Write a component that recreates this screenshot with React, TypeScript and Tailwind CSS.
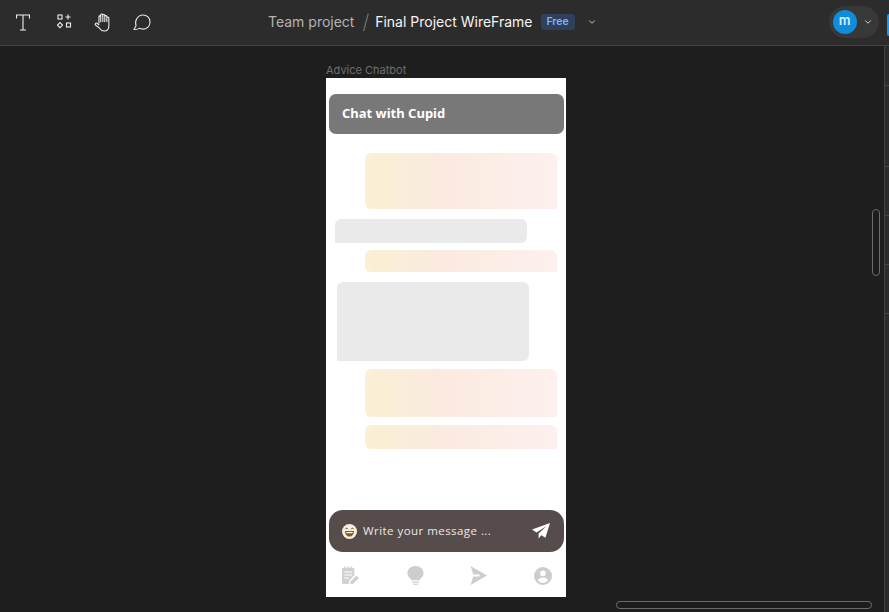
import React from 'react';
import { ChevronDown } from 'lucide-react';

const bubbleGradient = 'bg-gradient-to-r from-[#faf0d4] from-0% via-[#fbeae0] via-40% to-[#fdf0ee]';

const OutgoingBubble = ({ className }: { className: string }) => (
  <div className={`ml-[39px] w-[192px] rounded-t-[6px] rounded-bl-[6px] ${bubbleGradient} ${className}`} />
);

const App = () => {
  return (
    <div className="relative flex h-[612px] w-[889px] flex-col overflow-hidden bg-[#1e1e1e] font-['Inter',sans-serif]">
      {/* Top toolbar */}
      <header className="flex h-[46px] shrink-0 items-center border-b border-[#444444] bg-[#2c2c2c] pb-[1px]">
        <div className="flex w-[268px] items-center pl-[16px]">
          <svg width="14" height="17" viewBox="0 0 14 17" fill="none" stroke="#f0f0f0" strokeWidth="1.1">
            <path d="M0.5 4.5V1H13.5V4.5M7 1V16M4 16H10" />
          </svg>
          <svg width="15" height="16" viewBox="0 0 15 16" fill="none" stroke="#eeeeee" strokeWidth="1.1" className="ml-[27px]">
            <rect x="1" y="1" width="4" height="4" />
            <path d="M11 0.5V5.5M8.5 3H13.5" />
            <path d="M3 8.6L5.5 11.1L3 13.6L0.5 11.1Z" />
            <rect x="9.5" y="9" width="4" height="4" />
          </svg>
          <svg width="18" height="21" viewBox="0 0 20 22" fill="none" stroke="#f0f0f0" strokeWidth="1.2" strokeLinecap="round" strokeLinejoin="round" className="ml-[22px]">
            <path d="M5.5 11.5V4.5C5.5 3.4 7.5 3.4 7.5 4.5V2.6C7.5 1.2 9.8 1.2 9.8 2.6V3C9.8 1.8 12 1.8 12 3V4C12 3 14.3 3 14.3 4.4V5.5C14.3 4.6 16.5 4.6 16.5 5.8V15C16.5 18.6 14.4 20.5 11.4 20.5C8.8 20.5 7.6 19.4 6.4 17.6L1.6 13.8C0.6 12.8 2 11 3.4 11.8L5.5 13.6M7.5 4.5V10M9.8 3V10M12 4V10M14.3 5.5V10" />
          </svg>
          <svg width="18" height="17" viewBox="0 0 19 18" fill="none" stroke="#e8e8e8" strokeWidth="1.1" strokeLinejoin="round" className="ml-[21px]">
            <path d="M1 16.5L3.2 12.4C1.4 7.4 4.8 1 10.6 1C14.8 1 18 4.2 18 8.4C18 12.8 14.6 16 10.5 16C8.8 16 7.6 15.6 6.6 15.2C5 16 3 16.5 1 16.5Z" />
          </svg>
        </div>
        <div className="flex items-center text-[14px] leading-none">
          <span className="text-[#b3b3b3]">Team project</span>
          <span className="ml-[8px] text-[20px] font-extralight text-[#8a8a8a]">/</span>
          <span className="ml-[6px] text-[#f5f5f5]">Final Project WireFrame</span>
          <span className="ml-[8px] flex h-[16px] w-[34px] items-center justify-center rounded-[3px] bg-[#2f3f5c] text-[10.5px] font-semibold text-[#7cb7f5]">
            Free
          </span>
          <ChevronDown size={10} strokeWidth={2} className="ml-[12px] text-[#dddddd]" />
        </div>
        <div className="ml-[232px] flex h-[32px] w-[50px] items-center rounded-full bg-[#383838] pl-[4px]">
          <div className="flex h-[24px] w-[24px] items-center justify-center rounded-full bg-[#0d8ddb] pb-[2px] text-[13px] font-semibold text-[#d9effc]">
            m
          </div>
          <ChevronDown size={10} strokeWidth={2.2} className="ml-[6px] text-[#dddddd]" />
        </div>
      </header>

      {/* Canvas with the phone frame */}
      <main className="ml-[326px] w-[240px]">
        <p className="mt-[17px] h-[15px] text-[11px] leading-[14px] text-[#6e6e6e]">Advice Chatbot</p>
        <div className="flex h-[519px] flex-col bg-white">
          <div className="ml-[3px] mt-[16px] flex h-[40px] w-[235px] items-center rounded-[7px] bg-[#787878] pl-[13px] font-['Noto_Sans',sans-serif] text-[13px] font-bold text-white">
            Chat with Cupid
          </div>

          <OutgoingBubble className="mt-[19px] h-[56px]" />
          <div className="ml-[9px] mt-[10px] h-[24px] w-[192px] rounded-t-[6px] rounded-br-[6px] bg-[#eaeaea]" />
          <OutgoingBubble className="mt-[7px] h-[22px]" />
          <div className="ml-[11px] mt-[10px] h-[79px] w-[192px] rounded-t-[6px] rounded-br-[6px] bg-[#eaeaea]" />
          <OutgoingBubble className="mt-[8px] h-[48px]" />
          <OutgoingBubble className="mt-[8px] h-[24px]" />

          {/* Message input */}
          <div className="ml-[3px] mt-[61px] flex h-[42px] w-[235px] items-center rounded-[14px] bg-[#564c4c] pl-[13px]">
            <svg width="15" height="15" viewBox="0 0 15 15">
              <circle cx="7.5" cy="7.5" r="7.5" fill="#f5efe0" />
              <path d="M3 7H12C12 10.5 10 12.5 7.5 12.5C5 12.5 3 10.5 3 7Z" fill="#8a5a14" />
              <path d="M4.4 8H10.6V9.2H4.4Z" fill="#ffffff" />
              <path d="M3.4 5.2C3.9 3.9 5.3 3.9 5.9 5.2M9.1 5.2C9.7 3.9 11.1 3.9 11.6 5.2" fill="none" stroke="#6b4a1a" strokeWidth="1" />
            </svg>
            <span className="ml-[6px] w-[131px] whitespace-nowrap font-['Open_Sans',sans-serif] text-[11.5px] tracking-[0.45px] text-[#ece8e8]">Write your message ...</span>
            <svg width="18" height="16" viewBox="0 0 18 16" className="ml-[38px]">
              <path d="M18 0L0 6.6L4.4 9.4L14.4 3.2L6.6 10.6V15.6L9.4 12.2L13.4 14.8Z" fill="#ffffff" />
            </svg>
          </div>

          {/* Bottom navigation */}
          <nav className="ml-[15px] mt-[14px] flex items-center">
            <svg width="19" height="19" viewBox="0 0 19 19" fill="#d2d2d2">
              <path d="M1 3C1 2.2 1.6 1.7 2.4 1.7H3V0.6H4.4V1.7H6.4V0.6H7.8V1.7H9.6V0.6H11V1.7H12C12.8 1.7 13.4 2.2 13.4 3V9.2L8.4 14.4L7.6 18H2.4C1.6 18 1 17.4 1 16.6Z" />
              <path d="M3.4 6H11M3.4 9H11M3.4 12H7.6" stroke="#ffffff" strokeWidth="1.1" />
              <path d="M15.4 9.6L18 12L12 18H9.4V15.6Z" />
            </svg>
            <svg width="17" height="19" viewBox="0 0 17 20" fill="#cdcdcd" className="ml-[47px]">
              <path d="M8.5 0C13.2 0 17 3.2 17 7.6C17 11.2 13.8 12.6 12.6 15H4.4C3.2 12.6 0 11.2 0 7.6C0 3.2 3.8 0 8.5 0Z" />
              <path d="M4.8 16.2H12.2V17.6H4.8ZM6 18.6H11V19.8H6Z" />
            </svg>
            <svg width="17" height="19" viewBox="0 0 17 19" fill="#cdcdcd" className="ml-[46px]">
              <path d="M0.6 0L17 9.5L0.6 19L3.2 10.6H9.6V8.4H3.2Z" />
            </svg>
            <svg width="18" height="18" viewBox="0 0 18 18" fill="#cdcdcd" className="ml-[47px]">
              <path fillRule="evenodd" d="M9 0A9 9 0 1 1 9 18A9 9 0 1 1 9 0ZM9 3.4A2.9 2.9 0 1 0 9 9.2A2.9 2.9 0 1 0 9 3.4ZM9 10.6C6.8 10.6 4.4 11.6 4 13.4C5.2 15 7 15.8 9 15.8C11 15.8 12.8 15 14 13.4C13.6 11.6 11.2 10.6 9 10.6Z" />
            </svg>
          </nav>
        </div>
      </main>

      {/* Collapsed right panel, sits over the window edge */}
      <aside className="absolute bottom-0 right-0 top-[46px] flex w-[5px] flex-col border-l border-[#444444] bg-[#2c2c2c]">
        <div className="h-[40px] border-b border-[#444444]" />
        <div className="h-[81px] border-b border-[#444444]" />
        <div className="h-[49px] border-b border-[#444444]" />
        <div className="h-[49px] border-b border-[#444444]" />
        <div className="h-[49px] border-b border-[#444444]" />
      </aside>
      <div className="absolute right-0 top-[14px] h-[22px] w-[2px] rounded-l-[3px] bg-[#0d99ff]" />

      {/* Canvas scrollbars */}
      <div className="absolute left-[872px] top-[209px] h-[67px] w-[8px] rounded-full border border-[#6b6b6b] bg-[#1c1c1c]" />
      <div className="absolute left-[616px] top-[601px] h-[8px] w-[256px] rounded-full border border-[#6b6b6b] bg-[#1c1c1c]" />
    </div>
  );
};

export default App;
